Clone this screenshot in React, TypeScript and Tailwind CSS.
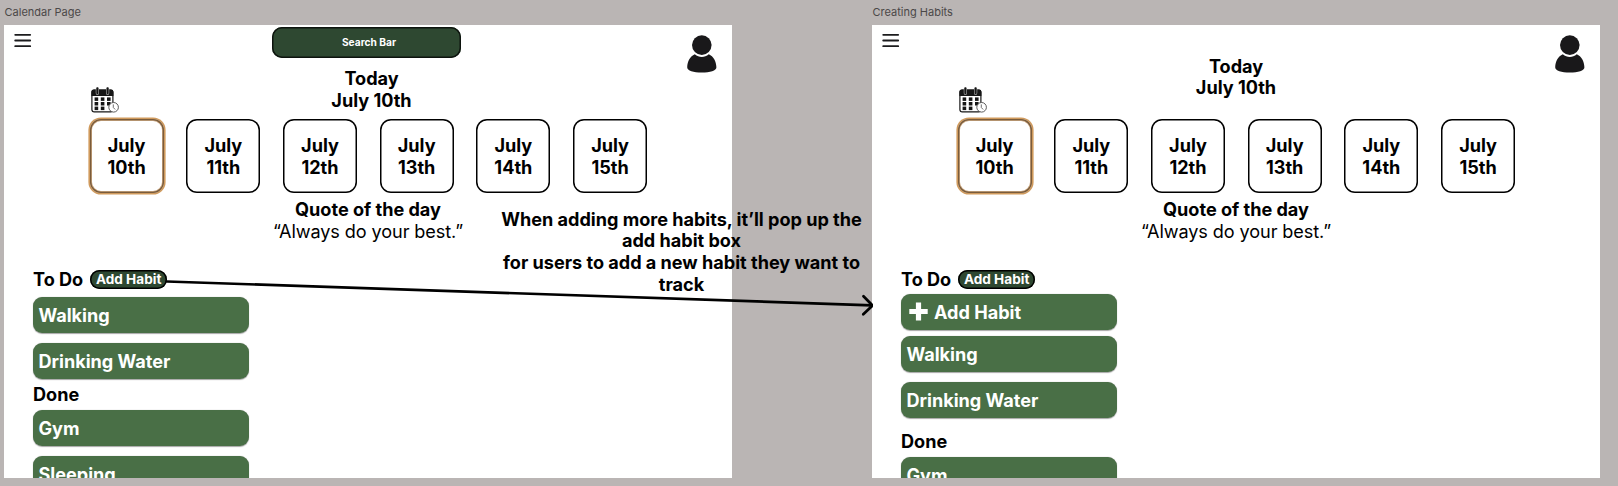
import type { ReactNode } from "react";

const days = ["10th", "11th", "12th", "13th", "14th", "15th"];

function MenuIcon() {
  return (
    <svg className="ml-[10px] mt-[8px] h-[16px] w-[18px] shrink-0" viewBox="0 0 18 16" stroke="#1c1c1e" strokeWidth="1.8" strokeLinecap="round">
      <path d="M1.2 1.8H16.2M1.2 7.5H16.2M1.2 13.2H16.2" />
    </svg>
  );
}

function UserIcon() {
  return (
    <svg className="mr-[15px] mt-[10px] h-[38px] w-[30px] shrink-0" viewBox="0 0 30 38" fill="#19181a">
      <circle cx="14.8" cy="10.1" r="9.8" />
      <path d="M7.8 19.3C10 21.2 12.3 22 14.8 22C17.3 22 19.6 21.2 21.8 19.3C26.5 21.4 29.2 26.5 29.4 32.2C29.5 35.6 23 37.6 14.8 37.6C6.6 37.6 0.1 35.6 0.2 32.2C0.4 26.5 3.1 21.4 7.8 19.3Z" />
    </svg>
  );
}

function CalendarIcon() {
  const cells = [
    [3.6, 10.4], [9.8, 10.4], [16, 10.4],
    [3.6, 15], [9.8, 15], [16, 15],
    [3.6, 19.6], [9.8, 19.6],
  ];
  return (
    <svg className="h-[26px] w-[29px]" viewBox="0 0 29 26" fill="none">
      <rect x="0.9" y="3" width="21" height="21.8" rx="2.4" fill="#fff" stroke="#161616" strokeWidth="1.2" />
      <path d="M0.4 9V4.8Q0.4 2.5 2.8 2.5H20Q22.4 2.5 22.4 4.8V9Z" fill="#161616" />
      <path d="M6.4 1.6V6.2M16.6 1.6V6.2" stroke="#ccc" strokeWidth="3.2" strokeLinecap="round" />
      <path d="M6.4 1.4V6.2M16.6 1.4V6.2" stroke="#161616" strokeWidth="2.2" strokeLinecap="round" />
      {cells.map(([x, y]) => (
        <rect key={`${x}-${y}`} x={x} y={y} width="3.6" height="3.5" fill="#161616" />
      ))}
      <circle cx="22.6" cy="20.3" r="4.8" fill="#fff" stroke="#4a4a4a" strokeWidth="0.9" />
      <path d="M22.3 17.4V20.5L24.2 22.5" stroke="#4a4a4a" strokeWidth="0.8" />
    </svg>
  );
}

function DayCard({ day, active }: { day: string; active: boolean }) {
  return (
    <div
      className={
        active
          ? "flex h-[74px] w-[74px] flex-col items-center justify-center rounded-[11px] pt-[1.5px] text-center shadow-[0_0_0_1.6px_#d09a5c,inset_0_0_0_1.3px_#7a5c3c,inset_0_0_0_2px_#c9a680]"
          : "flex h-[74px] w-[74px] flex-col items-center justify-center rounded-[11px] pt-[1.5px] text-center shadow-[inset_0_0_0_1.5px_#000]"
      }
    >
      <div>July</div>
      <div>{day}</div>
    </div>
  );
}

function Habit({ children }: { children: ReactNode }) {
  return (
    <div className="flex h-[36px] w-[216px] shrink-0 items-center rounded-[9px] bg-[#496f46] pl-[5.5px] pt-px text-white shadow-[0_0.5px_1px_rgba(0,0,0,0.35)]">
      {children}
    </div>
  );
}

function Frame({
  title,
  search,
  todayClass,
  children,
}: {
  title: string;
  search?: boolean;
  todayClass: string;
  children: ReactNode;
}) {
  return (
    <section className="flex w-[728px] shrink-0 flex-col">
      <h2 className="h-[25px] pl-[0.5px] pt-[4px] text-[11px] font-normal leading-[16px] text-[#4b4848]">{title}</h2>
      <div className="flex h-[452.5px] flex-col overflow-hidden bg-white">
        <header className="flex h-0 items-start justify-between">
          <MenuIcon />
          {search && (
            <div className="ml-[14px] mt-[2px] flex h-[31px] w-[189px] shrink-0 items-center justify-center rounded-[10px] bg-[#2e4831] pl-[5px] pt-px text-[10.2px] text-white shadow-[inset_0_0_0_1.5px_#0d130e]">
              Search Bar
            </div>
          )}
          <UserIcon />
        </header>
        <div className={todayClass}>
          <div className="self-end pb-[6px] pl-[87px]">
            <CalendarIcon />
          </div>
          <div className="text-center">
            <div>Today</div>
            <div>July 10th</div>
          </div>
        </div>
        <div className="flex shrink-0 gap-[22.7px] pl-[85.6px]">
          {days.map((d, i) => (
            <DayCard key={d} day={d} active={i === 0} />
          ))}
        </div>
        <div className="mt-[6.5px] h-[69.5px] shrink-0 text-center">
          <div>Quote of the day</div>
          <div className="font-normal tracking-[-0.08px]">“Always do your best.”</div>
        </div>
        <div className="flex shrink-0 flex-col pl-[29px]">
          <div className="flex h-[22px] items-center">
            <span>To Do</span>
            <span className="ml-[7px] flex h-[19px] w-[77px] items-center justify-center rounded-full bg-[#2e4831] text-[13.6px] text-white shadow-[inset_0_0_0_1.5px_#000]">
              Add Habit
            </span>
          </div>
          {children}
        </div>
      </div>
    </section>
  );
}

export default function App() {
  return (
    <main className="relative flex h-[486px] w-[1618px] gap-[140px] overflow-hidden bg-[#bab5b4] pl-[4px] font-['Inter',sans-serif] text-[18.08px] font-bold leading-[21.8px] text-black">
      <Frame title="Calendar Page" search todayClass="mt-[42.8px] grid h-[51.2px] shrink-0 grid-cols-[120px_1fr_113px]">
        <div className="mt-[6px] flex flex-col gap-[10px]">
          <Habit>Walking</Habit>
          <Habit>Drinking Water</Habit>
        </div>
        <div className="mt-[5px]">Done</div>
        <div className="mt-[4.2px] flex flex-col gap-[10px]">
          <Habit>Gym</Habit>
          <Habit>Sleeping</Habit>
        </div>
      </Frame>
      <Frame title="Creating Habits" todayClass="mt-[30.6px] grid h-[63.4px] shrink-0 grid-cols-[120px_1fr_120px]">
        <div className="mt-[3px]">
          <Habit>
            <svg className="-mt-0.5 ml-[2.5px] mr-[6px] h-[19px] w-[19px]" viewBox="0 0 19 19" fill="#fff">
              <path d="M6.9 0.5H12.1V6.9H18.7V12.1H12.1V18.5H6.9V12.1H0.3V6.9H6.9Z" />
            </svg>
            <span className="pt-px">Add Habit</span>
          </Habit>
        </div>
        <div className="mt-[6px] flex flex-col gap-[10px]">
          <Habit>Walking</Habit>
          <Habit>Drinking Water</Habit>
        </div>
        <div className="mt-[13.5px]">Done</div>
        <div className="mt-[4.2px]">
          <Habit>Gym</Habit>
        </div>
      </Frame>
      <p className="absolute left-[491.5px] top-[208.5px] w-[380px] text-center">
        When adding more habits, it’ll pop up the
        <br />
        add habit box
        <br />
        for users to add a new habit they want to
        <br />
        track
      </p>
      <svg className="absolute left-[160px] top-[270px] h-[60px] w-[712.5px]" viewBox="0 0 712.5 60" fill="none" stroke="#000" strokeWidth="2.7" strokeLinecap="round">
        <path d="M7 11.5L712 35.3M703.5 26.3L712.5 35.5L703.3 44.3" />
      </svg>
    </main>
  );
}
